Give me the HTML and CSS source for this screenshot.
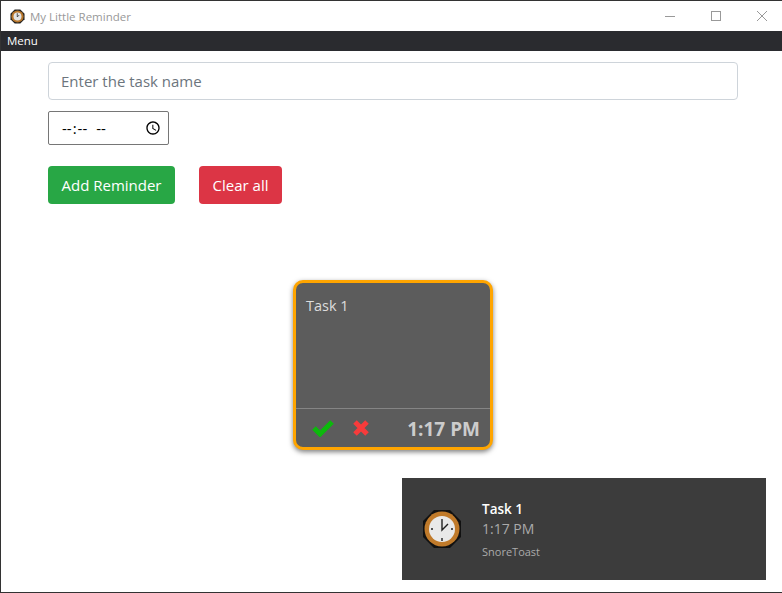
FILE: index.html
```html
<!DOCTYPE html>
<html>
    <head>
        <meta charset="utf-8">
        <title>My Little Reminder</title>
        <link rel="stylesheet" href="styles.css">
    </head>
    <body>
        <div class="window">
            <div class="titlebar">
                <svg class="app-icon" width="15" height="15" viewBox="0 0 32 32">
                    <polygon points="10,1 22,1 31,10 31,22 22,31 10,31 1,22 1,10" fill="#222"/>
                    <circle cx="16" cy="16" r="13" fill="#b9772b"/>
                    <circle cx="16" cy="16" r="8.5" fill="#e4e4e4"/>
                    <path d="M15.5 9v8l4-4" fill="none" stroke="#333" stroke-width="1.8"/>
                </svg>
                <span class="app-title">My Little Reminder</span>
                <div class="win-controls">
                    <svg width="12" height="12" viewBox="0 0 12 12"><path d="M1 6.5h10" stroke="#999" stroke-width="1"/></svg>
                    <svg width="12" height="12" viewBox="0 0 12 12"><rect x="1.5" y="1.5" width="9" height="9" fill="none" stroke="#999"/></svg>
                    <svg width="12" height="12" viewBox="0 0 12 12"><path d="M1 1l10 10M11 1L1 11" stroke="#999" stroke-width="1"/></svg>
                </div>
            </div>
            <div class="menubar">Menu</div>
            <div class="content">
                <input class="task-name" type="text" placeholder="Enter the task name">
                <input class="task-time" type="time">
                <div class="actions">
                    <button class="btn btn-add">Add Reminder</button>
                    <button class="btn btn-clear">Clear all</button>
                </div>
            </div>
            <div class="cards">
                <div class="card">
                    <div class="card-text">Task 1</div>
                    <div class="card-footer">
                        <svg class="card-icon" width="24" height="18" viewBox="0 0 24 18"><path d="M3 9l6 6L21 3" fill="none" stroke="#0cb90c" stroke-width="5"/></svg>
                        <svg class="card-icon" width="18" height="18" viewBox="0 0 18 18"><path d="M3 3l12 12M15 3L3 15" fill="none" stroke="#f73b3b" stroke-width="5"/></svg>
                        <span class="card-time">1:17 PM</span>
                    </div>
                </div>
            </div>
            <div class="toast">
                <svg width="40" height="40" viewBox="0 0 40 40">
                    <polygon points="12,1 28,1 39,12 39,28 28,39 12,39 1,28 1,12" fill="#111"/>
                    <circle cx="20" cy="20" r="17.5" fill="#c07a2a"/>
                    <circle cx="20" cy="20" r="13" fill="#e9e9e9"/>
                    <path d="M20 10v11l6-6" fill="none" stroke="#222" stroke-width="1.4"/>
                    <path d="M20 29v3M9 20h2M29 20h2" stroke="#222" stroke-width="1.4"/>
                </svg>
                <div class="toast-body">
                    <div class="toast-title">Task 1</div>
                    <div class="toast-time">1:17 PM</div>
                    <div class="toast-app">SnoreToast</div>
                </div>
            </div>
        </div>
    </body>
</html>
```

FILE: styles.css
```css
html, body {
    margin: 0;
    height: 100%;
    background-color: white;
    font-family: "Open Sans", "Noto Sans", sans-serif;
}
.window {
    position: relative;
    box-sizing: border-box;
    height: 593px;
    border: 1px solid #333;
    border-right: none;
    overflow: hidden;
}
.titlebar {
    display: flex;
    align-items: center;
    height: 30px;
    padding-left: 9px;
}
.app-title {
    margin-left: 5px;
    font-size: 11.5px;
    color: #999;
}
.win-controls {
    margin-left: auto;
    display: flex;
    gap: 34px;
    padding-right: 14px;
}
.menubar {
    height: 20px;
    line-height: 20px;
    padding-left: 6px;
    background-color: #2a2b2f;
    color: white;
    font-size: 11.5px;
}
.content {
    padding: 11px 44px 0 47px;
}
.task-name {
    display: block;
    box-sizing: border-box;
    width: 100%;
    height: 38px;
    padding: 6px 12px;
    border: 1px solid #ced4da;
    border-radius: 4px;
    font: 15px "Open Sans", sans-serif;
}
.task-name::placeholder {
    color: #6c757d;
}
.task-time {
    display: block;
    box-sizing: border-box;
    width: 121px;
    height: 34px;
    margin-top: 11px;
    padding: 1px 4px 1px 12px;
    border: 1px solid #767676;
    border-radius: 2px;
    font: 15px "Open Sans", sans-serif;
}
.task-time::-webkit-datetime-edit-hour-field,
.task-time::-webkit-datetime-edit-minute-field,
.task-time::-webkit-datetime-edit-ampm-field {
    letter-spacing: 1px;
}
.task-time::-webkit-datetime-edit-ampm-field {
    margin-left: 5px;
}
.actions {
    display: flex;
    gap: 24px;
    margin-top: 21px;
}
.btn {
    height: 38px;
    padding: 0 13px;
    border: none;
    border-radius: 4px;
    color: white;
    font: 15px "Open Sans", sans-serif;
}
.btn-add {
    width: 127px;
    background-color: #28a745;
}
.btn-clear {
    width: 83px;
    background-color: #dc3545;
}
.cards {
    padding: 76px 0 0 292px;
}
.card {
    display: flex;
    flex-direction: column;
    box-sizing: border-box;
    width: 200px;
    height: 170px;
    background-color: #5c5c5c;
    border: 3px solid orange;
    border-radius: 10px;
    box-shadow: 0 2px 5px rgba(0, 0, 0, 0.5);
    color: #ddd;
}
.card-text {
    flex: 1;
    padding: 13px 10px 11px;
    font-size: 14.5px;
    line-height: 20px;
}
.card-footer {
    display: flex;
    align-items: center;
    height: 38px;
    padding: 0 10px 0 15px;
    border-top: 1px solid #858585;
}
.card-icon + .card-icon {
    margin-left: 17px;
}
.card-time {
    margin: 2px 0 0 auto;
    font-size: 19px;
    font-weight: bold;
    color: #ccc;
}
.toast {
    position: absolute;
    left: 401px;
    top: 477px;
    display: flex;
    align-items: center;
    box-sizing: border-box;
    width: 364px;
    height: 102px;
    padding-left: 20px;
    background-color: #3c3c3c;
}
.toast-body {
    margin-left: 20px;
}
.toast-title {
    font-size: 13.5px;
    font-weight: 600;
    line-height: 20px;
    color: white;
}
.toast-time {
    font-size: 14px;
    line-height: 20px;
    color: #aaa;
}
.toast-app {
    margin-top: 5px;
    font-size: 11px;
    line-height: 16px;
    color: #aaa;
}
```
